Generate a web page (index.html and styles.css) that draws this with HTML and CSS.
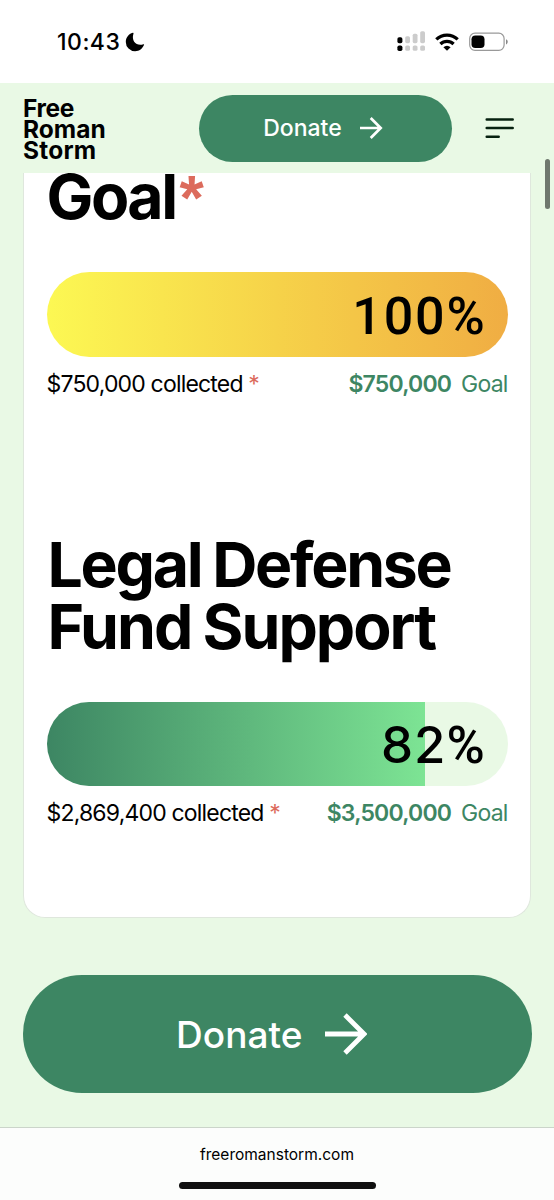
FILE: index.html
```html
<!DOCTYPE html>
<html lang="en">
<head>
<meta charset="utf-8">
<meta name="viewport" content="width=device-width, initial-scale=1">
<title>Free Roman Storm</title>
<link rel="stylesheet" href="styles.css">
</head>
<body>
<div class="phone">
  <div class="status-bar">
    <div class="clock"><span class="time">10:43</span>
      <svg class="moon" width="20" height="20" viewBox="0 0 20 20"><path d="M7.8.7C3.600 2 .8 5.500.8 9.900a9.300 9.300 0 0 0 9.300 9.300c4.200 0 7.500-2.600 9-6.400.1-.5-.3-.8-.8-.6C12.200 14.500 5.800 9.500 8.500 1.500c.2-.6-.1-1-.7-.8z"/></svg>
    </div>
    <div class="indicators">
      <svg width="29" height="21" viewBox="0 0 29 21">
        <g fill="#ccc"><rect x="8.200" y="5.200" width="4.800" height="7" rx="1.600"/><rect x="15.700" y="2.700" width="4.800" height="9.500" rx="1.600"/><rect x="23.200" y=".2" width="4.800" height="12" rx="1.600"/><rect x="8.200" y="14.500" width="4.800" height="5.300" rx="1.600"/><rect x="15.700" y="14.500" width="4.800" height="5.300" rx="1.600"/><rect x="23.200" y="14.500" width="4.800" height="5.300" rx="1.600"/></g>
        <rect x=".4" y="6.200" width="5" height="6" rx="1.700"/><rect x=".4" y="14.500" width="5" height="5.500" rx="1.700"/>
      </svg>
      <svg class="wifi" width="24" height="18" viewBox="0 0 24 18"><g fill="none" stroke="#000" stroke-width="3.200"><path d="M1.300 6.400a15.300 15.300 0 0 1 21.400 0"/><path d="M5.400 11a9.400 9.400 0 0 1 13.200 0"/></g><path d="M12 17.800l-3.600-3.500a5 5 0 0 1 7.200 0z"/></svg>
      <svg class="battery" width="39" height="20" viewBox="0 0 39 20"><rect x=".7" y="1.200" width="34.400" height="17.200" rx="5.300" fill="none" stroke="#999" stroke-width="1.200"/><rect x="2.500" y="3.500" width="13" height="12.600" rx="3.800"/><path d="M37 7.200c2.300 1 2.300 4.200 0 5.200z" fill="#888"/></svg>
    </div>
  </div>
  <header class="site-header">
    <div class="logo"><span class="l1">Free</span><span class="l2">Roman</span><span class="l3">Storm</span></div>
    <a class="donate donate-small"><span>Donate</span><svg width="24" height="24" viewBox="0 0 24 24"><path d="M1 12h20M11.700 2l10 10-10 10" fill="none" stroke="#fff" stroke-width="2.700"/></svg></a>
    <svg class="menu" width="30" height="22" viewBox="0 0 30 22"><path d="M1.700 2.500h26M1.700 11.100h26M1.700 19.700h12" fill="none" stroke="#06210f" stroke-width="2.500" stroke-linecap="round"/></svg>
  </header>
  <main class="content">
    <section class="card">
      <h2 class="title title-goal">Goal<span class="star">*</span></h2>
      <div class="bar bar-yellow"><span>100%</span></div>
      <div class="caption"><span class="collected">$750,000 collected <i>*</i></span><span class="goal"><b>$750,000</b><em>Goal</em></span></div>
      <h2 class="title title-fund"><span class="t1">Legal Defense</span><span class="t2">Fund Support</span></h2>
      <div class="bar bar-green"><span><span class="digits">82</span>%</span></div>
      <div class="caption"><span class="collected">$2,869,400 collected <i>*</i></span><span class="goal"><b>$3,500,000</b><em>Goal</em></span></div>
    </section>
    <a class="donate donate-large"><span>Donate</span><svg width="43" height="42" viewBox="0 0 43 42"><path d="M1 21h38M21 2l19 19-19 19" fill="none" stroke="#fff" stroke-width="4.800"/></svg></a>
  </main>
  <footer class="browser-bar"><div class="url">freeromanstorm.com</div><div class="home"></div></footer>
  <div class="scroll-thumb"></div>
</div>
</body>
</html>
```
FILE: styles.css
```css
* { box-sizing: border-box; }
body { margin: 0; }
.phone {
  position: relative;
  width: 554px;
  height: 1200px;
  overflow: hidden;
  display: flex;
  flex-direction: column;
  background: #e9f9e5;
  color: #000;
  font-family: Inter, "Liberation Sans", sans-serif;
}
svg { display: block; flex: none; }
.status-bar {
  height: 83px;
  flex: none;
  padding: 0 46px 0 57px;
  display: flex;
  align-items: center;
  justify-content: space-between;
  background: #fff;
}
.clock { display: flex; align-items: center; gap: 5px; }
.time { font-size: 23px; font-weight: 500; line-height: 28px; letter-spacing: .5px; }
.indicators { display: flex; align-items: center; }
.wifi { margin-left: 9px; }
.battery { margin-left: 10px; }
.site-header {
  height: 90px;
  flex: none;
  display: flex;
  align-items: center;
  padding: 0 38px 0 23px;
}
.logo {
  width: 176px;
  display: flex;
  flex-direction: column;
  font-size: 24.500px;
  font-weight: 700;
  line-height: 21px;
  padding-top: 2px;
}
.l1 { letter-spacing: -.4px; }
.l2 { letter-spacing: 0; }
.l3 { letter-spacing: .2px; }
.donate {
  display: flex;
  align-items: center;
  justify-content: center;
  background: #3d8663;
  color: #fff;
  border-radius: 60px;
}
.donate-small {
  width: 253px;
  height: 67px;
  padding-right: 5px;
  gap: 17px;
  font-size: 23px;
  font-weight: 450;
  line-height: 28px;
}
.menu { margin-left: 33px; }
.content { height: 954px; flex: none; padding: 0 22.500px 0 23px; }
.card {
  height: 745px;
  margin-right: .5px;
  padding: 0 22.500px 0 22.500px;
  background: #fff;
  border: 1px solid #dfe7dd;
  border-top: 0;
  border-radius: 0 0 22px 22px;
}
.title { margin: 0; font-size: 62.500px; font-weight: 700; line-height: 62px; white-space: nowrap; }
.title-goal { height: 99.400px; line-height: 46px; letter-spacing: -2.500px; }
.star {
  margin-left: 4px;
  color: #dc6b5c;
  font-family: "Liberation Sans", sans-serif;
  font-weight: 700;
}
.title-fund { display: flex; flex-direction: column; margin-top: 135.500px; padding-left: 1px; height: 168.600px; word-spacing: -1.500px; }
.t1 { letter-spacing: -2.300px; }
.t2 { letter-spacing: -2px; }
.bar {
  height: 84.500px;
  display: flex;
  align-items: center;
  justify-content: flex-end;
  padding: 3px 21px 0 0;
  border-radius: 43px;
  font-family: Roboto, Inter, sans-serif;
  font-size: 52px;
  font-weight: 500;
  letter-spacing: 1.800px;
}
.digits { font-family: Inter, sans-serif; font-size: 51px; letter-spacing: 1px; }
.bar-yellow { background: linear-gradient(90deg, #fcf853, #f6d249 50%, #f0ad43); }
.bar-green { background: linear-gradient(90deg, #3d8663, #7de494) 0 0 / 82% 100% no-repeat #e9f9e5; padding-top: 1px; }
.caption {
  display: flex;
  justify-content: space-between;
  margin-top: 13px;
  font-size: 23px;
  line-height: 28px;
  letter-spacing: -.820px;
  white-space: nowrap;
}
.caption i, .caption em { font-style: normal; }
.caption i { color: #dc6b5c; }
.goal { display: flex; gap: 10px; color: #3d8663; }
.goal b { font-weight: 600; }
.donate-large {
  margin-top: 57px;
  height: 118px;
  padding-right: 11px;
  gap: 22px;
  font-size: 37px;
  font-weight: 450;
}
.browser-bar {
  height: 73px;
  flex: none;
  border-top: 1px solid #cbd5ca;
  background: #fcfdfc;
  display: flex;
  flex-direction: column;
  align-items: center;
}
.url { margin-top: 17px; font-size: 15.500px; line-height: 20px; letter-spacing: 0; }
.home { width: 197px; height: 7px; margin-top: 17px; border-radius: 4px; background: #101010; }
.scroll-thumb {
  position: absolute;
  left: 545px;
  top: 159px;
  width: 5px;
  height: 50px;
  border-radius: 3px;
  background: #6f786e;
}
```
